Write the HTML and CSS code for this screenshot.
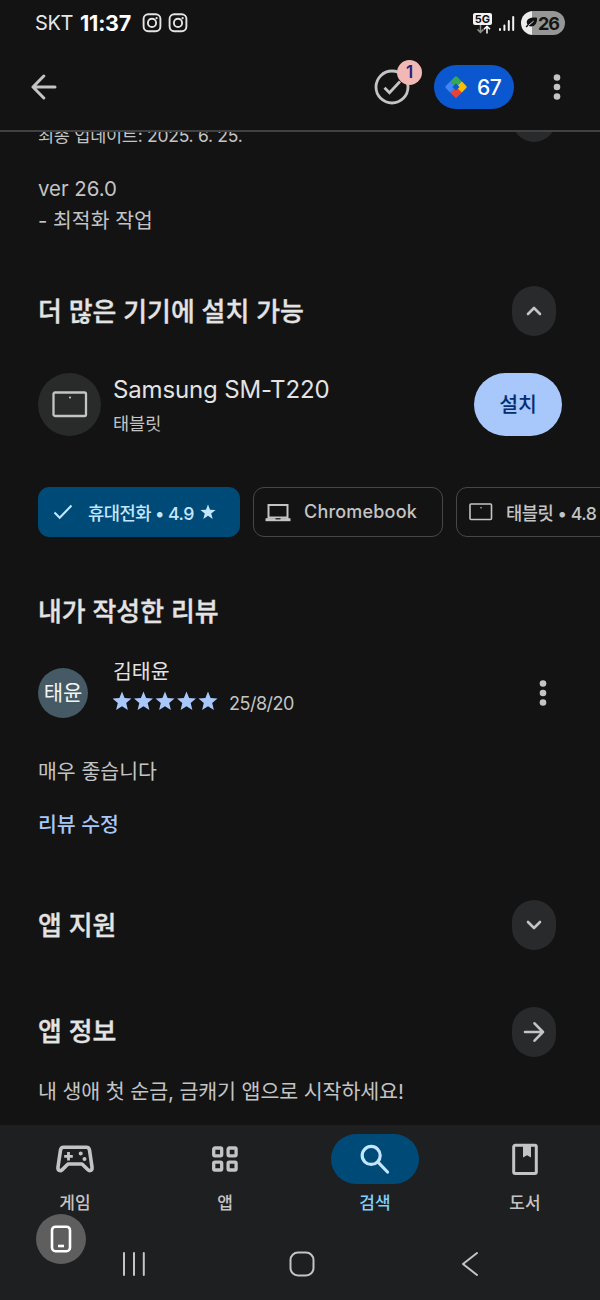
FILE: index.html
```html
<!DOCTYPE html>
<html lang="ko">
<head>
<meta charset="utf-8">
<title>앱 상세정보</title>
<link rel="stylesheet" href="styles.css">
</head>
<body>
<div class="screen">
  <header class="status">
    <span class="carrier">SKT</span>
    <span class="clock">11:37</span>
    <svg class="insta" width="20" height="20" viewBox="0 0 20 20"><rect x="1.6" y="1.2" width="16.8" height="17" rx="4.6"/><circle cx="10" cy="9.9" r="4.1"/><circle class="lens" cx="14.6" cy="5.2" r="1.1"/></svg>
    <svg class="insta second" width="20" height="20" viewBox="0 0 20 20"><rect x="1.6" y="1.2" width="16.8" height="17" rx="4.6"/><circle cx="10" cy="9.9" r="4.1"/><circle class="lens" cx="14.6" cy="5.2" r="1.1"/></svg>
    <div class="network">
      <span class="net-label">5G</span>
      <svg width="16" height="9" viewBox="0 0 16 9" fill="none" stroke-width="1.5"><path stroke="#8b8b8b" d="M5.5 0v7M2.5 4.4l3 3 3-3"/><path stroke="#fff" d="M12 8.5V1M9 4.2l3-3 3 3"/></svg>
    </div>
    <svg class="signal" width="17" height="17" viewBox="0 0 17 17" fill="none" stroke="#f2f2f2" stroke-width="2" stroke-linecap="round"><path d="M2 14v1M6.4 10.5V15M10.8 6v9"/><path d="M15.2 2v13"/></svg>
    <div class="battery">
      <svg width="13" height="12" viewBox="0 0 13 12"><path fill="#111" d="M12 .7C7 .2 2.5 1 1.8 4.6c-.2 1.2.1 2.2.7 3L.6 9.5l1 .9 1.8-1.6C8 11 12.500 7.500 12 .7z"/><path d="M3.300 8.600 8.600 4.200" stroke="#ddd" stroke-width="1"/></svg>
      <span>26</span>
    </div>
  </header>

  <div class="appbar">
    <svg class="back" width="26" height="26" viewBox="0 0 26 26"><path d="M24 13H2M12.800 2 2 13l10.800 11"/></svg>
    <div class="task">
      <svg width="36" height="36" viewBox="0 0 36 36"><circle cx="18" cy="18" r="16"/><path d="m10.500 18.700 5 5L26 12.500"/></svg>
      <span class="badge">1</span>
    </div>
    <div class="points">
      <svg width="24" height="24" viewBox="0 0 24 24"><g transform="rotate(45 12 12)"><path fill="#fbbc04" d="M12 4h6.500Q20 4 20 5.500V12h-8z"/><path fill="#ea4335" d="M12 12h8v6.500q0 1.500-1.500 1.500H12z"/><path fill="#4285f4" d="M4 12h8v8H5.500Q4 20 4 18.500z"/><path fill="#34a853" d="M4 12V5.500Q4 4 5.500 4H12v8z"/><rect x="9.500" y="9.500" width="5" height="5" fill="#0b57d0"/></g></svg>
      <span>67</span>
    </div>
    <svg class="dots" width="8" height="28" viewBox="0 0 8 28"><circle cx="4" cy="4.500" r="3.300"/><circle cx="4" cy="14" r="3.300"/><circle cx="4" cy="23.500" r="3.300"/></svg>
  </div>

  <main class="content">
    <div class="row updated">
      <p>최종 업데이트: 2025. 6. 25.</p>
      <span class="round"></span>
    </div>
    <div class="notes">
      <p class="ver">ver 26.0</p>
      <p>- 최적화 작업</p>
    </div>
    <div class="row devices-head">
      <h2>더 많은 기기에 설치 가능</h2>
      <span class="round"><svg width="16" height="10" viewBox="0 0 16 10"><path d="m2 8 6-6 6 6"/></svg></span>
    </div>
    <div class="device">
      <span class="device-icon"><svg width="36" height="27" viewBox="0 0 36 27"><rect x="1.500" y="1.500" width="32.500" height="23.500" rx="1.500"/><circle cx="18" cy="6.500" r="1.100"/></svg></span>
      <div class="device-text">
        <p class="model">Samsung SM-T220</p>
        <p class="kind">태블릿</p>
      </div>
      <span class="install">설치</span>
    </div>
    <div class="chips">
      <div class="chip selected">
        <svg width="20" height="16" viewBox="0 0 20 16"><path d="m1.500 8.500 5.200 5.300L18.500 1.500"/></svg>
        <span class="phone">휴대전화 • <b>4.9</b></span>
        <svg class="chip-star" width="16" height="16" viewBox="0 0 20 20"><path d="m10 .5 2.500 6.700 7 .3-5.500 4.400 1.900 6.900-5.900-4-5.900 4L6 11.900.500 7.500l7-.3z"/></svg>
      </div>
      <div class="chip chromebook">
        <svg width="26" height="19" viewBox="0 0 26 19"><path fill="none" stroke="#c4c4c4" stroke-width="2" d="M3.500 16V2h19v14"/><path fill="#c4c4c4" d="M.5 15.200h25v3H.5z"/><path fill="#c4c4c4" d="M3 13.500h20v2H3z"/><path fill="#131313" d="M10.500 15.200h5v1.200h-5z"/></svg>
        <span>Chromebook</span>
      </div>
      <div class="chip tablet">
        <svg width="24" height="18" viewBox="0 0 24 18"><rect x="1" y="1" width="21.500" height="15.500" rx="1" fill="none" stroke="#c4c4c4" stroke-width="1.600"/><circle cx="12" cy="4.700" r=".8" fill="#c4c4c4"/></svg>
        <span>태블릿 • <b>4.8</b></span>
      </div>
    </div>
    <h2 class="review-head">내가 작성한 리뷰</h2>
    <div class="reviewer">
      <span class="avatar">태윤</span>
      <div class="reviewer-text">
        <p class="name">김태윤</p>
        <div class="rating">
          <svg width="105" height="20" viewBox="0 0 105 20"><defs><path id="star" d="m10 .5 2.600 6.500 6.900.5-5.300 4.500 1.700 6.900-5.900-3.700-5.900 3.700L5.800 12 .500 7.500l6.900-.5z"/></defs><use href="#star" x="-1"/><use href="#star" x="20.500"/><use href="#star" x="42"/><use href="#star" x="63.500"/><use href="#star" x="85"/></svg>
          <span>25/8/20</span>
        </div>
      </div>
      <svg class="dots" width="8" height="28" viewBox="0 0 8 28"><circle cx="4" cy="4.500" r="3.300"/><circle cx="4" cy="14" r="3.300"/><circle cx="4" cy="23.500" r="3.300"/></svg>
    </div>
    <p class="review">매우 좋습니다</p>
    <p class="edit">리뷰 수정</p>
    <div class="row support">
      <h2>앱 지원</h2>
      <span class="round"><svg width="16" height="10" viewBox="0 0 16 10"><path d="m2 2 6 6 6-6"/></svg></span>
    </div>
    <div class="row about">
      <h2>앱 정보</h2>
      <span class="round"><svg width="22" height="22" viewBox="0 0 22 22"><path d="M2 11h18M11.500 2.300 20 11l-8.500 8.700"/></svg></span>
    </div>
    <p class="summary">내 생애 첫 순금, 금캐기 앱으로 시작하세요!</p>
  </main>

  <footer class="bottom">
    <nav class="tabs">
      <div class="tab">
        <span class="tab-icon"><svg width="40" height="30" viewBox="0 0 40 30" fill="none" stroke="#c4c4c4" stroke-width="3.600" stroke-linejoin="round"><path d="M8.700 3.300h22.600q2.700 0 3.200 2.800l2.500 17c.4 3.500-2.300 4.500-4.300 2.500L27 20H13l-5.700 5.600c-2 2-4.700 1-4.300-2.500L5.500 6.100q.5-2.800 3.200-2.800z"/><path stroke-width="2.800" d="M13.500 8v8.600M9.200 12.300h8.600"/><g fill="#c4c4c4" stroke="none"><circle cx="25.700" cy="9.500" r="2"/><circle cx="29.500" cy="15" r="2"/></g></svg></span>
        <span class="tab-label">게임</span>
      </div>
      <div class="tab">
        <span class="tab-icon"><svg width="28" height="28" viewBox="0 0 28 28" fill="none" stroke="#c4c4c4" stroke-width="3.300"><rect x="2.700" y="3" width="8" height="7.800" rx="1.200"/><rect x="17.100" y="3" width="8" height="7.800" rx="1.200"/><rect x="2.700" y="17.200" width="8" height="7.800" rx="1.200"/><rect x="17.100" y="17.200" width="8" height="7.800" rx="1.200"/></svg></span>
        <span class="tab-label">앱</span>
      </div>
      <div class="tab active">
        <span class="tab-icon"><svg width="32" height="32" viewBox="0 0 32 32" fill="none" stroke="#c2e7ff" stroke-width="3.200" stroke-linecap="round"><circle cx="12.200" cy="12.400" r="9"/><path d="m19 19.200 9.500 9.800"/></svg></span>
        <span class="tab-label">검색</span>
      </div>
      <div class="tab">
        <span class="tab-icon"><svg width="28" height="34" viewBox="0 0 28 34"><rect x="2.700" y="3.300" width="22.600" height="28.200" rx="1.500" fill="none" stroke="#c4c4c4" stroke-width="3"/><path fill="#c4c4c4" d="M12 3h8v12.500l-4-2.300-4 2.300z"/></svg></span>
        <span class="tab-label">도서</span>
      </div>
    </nav>
    <div class="sysnav">
      <svg width="26" height="26" viewBox="0 0 26 26"><path d="M3 2v22M13 2v22M22.800 2v22"/></svg>
      <svg width="26" height="26" viewBox="0 0 26 26"><rect x="1.500" y="1.500" width="23" height="23" rx="7.500"/></svg>
      <svg width="26" height="26" viewBox="0 0 26 26"><path d="M20 2 6 13l14 11"/></svg>
    </div>
    <span class="rotate"><svg width="22" height="28" viewBox="0 0 22 28"><rect x="2" y="1.700" width="18" height="24.500" rx="3.500"/><path d="M8 21h6"/></svg></span>
  </footer>
</div>
</body>
</html>
```
FILE: styles.css
```css
* { box-sizing: border-box; margin: 0; padding: 0; }
body { background: #131313; color: #c4c4c4; font-family: Inter, "Noto Sans CJK KR", sans-serif; }
p, h2, span { white-space: nowrap; }
svg { display: block; flex: none; }
.screen { width: 600px; height: 1300px; overflow: hidden; display: flex; flex-direction: column; }

.status { height: 46px; flex: none; display: flex; align-items: center; padding-left: 35px; color: #fff; }
.carrier { width: 45px; font-size: 20px; letter-spacing: -.4px; color: #e6e6e6; }
.clock { width: 62px; font-size: 21.500px; font-weight: 700; letter-spacing: -.2px; }
.insta { fill: none; stroke: #e4e4e4; stroke-width: 1.9; }
.insta.second { margin-left: 6px; }
.insta .lens { fill: #e4e4e4; stroke: none; }
.network { margin-left: 285px; width: 19px; display: flex; flex-direction: column; align-items: center; }
.net-label { width: 19px; height: 12px; border-radius: 2px; background: #f4f4f4; color: #111; font-size: 11px; line-height: 12px; font-weight: 700; text-align: center; }
.signal { margin-left: 6px; }
.battery { margin-left: 6px; width: 44px; height: 24px; border-radius: 12px; background: linear-gradient(90deg, #ececec 11px, #969696 11px); display: flex; align-items: center; padding-left: 4px; color: #151515; font-size: 18px; font-weight: 700; letter-spacing: -1px; }

.appbar { height: 86px; flex: none; display: flex; align-items: center; padding: 1px 39px 3px 31px; border-bottom: 2px solid #414141; }
.back { fill: none; stroke: #c4c4c4; stroke-width: 3; stroke-linecap: round; stroke-linejoin: round; }
.task { position: relative; margin-left: 317px; fill: none; stroke: #c4c4c4; stroke-width: 2.800; }
.badge { position: absolute; left: 23px; top: -9px; width: 25px; height: 25px; border-radius: 50%; background: #f2b8b5; color: #1f1f7a; font-size: 17px; line-height: 25px; font-weight: 600; text-align: center; }
.points { margin-left: 24px; width: 80px; height: 44px; border-radius: 22px; background: #0b57d0; color: #fff; display: flex; align-items: center; padding-left: 10px; gap: 9px; font-size: 21px; font-weight: 500; letter-spacing: -.6px; }
.dots { margin-left: auto; fill: #c4c4c4; }

.content { height: 993px; flex: none; overflow: hidden; padding: 0 44px 0 38px; }
.row { display: flex; justify-content: space-between; height: 50px; align-items: center; }
.round { width: 44px; height: 50px; border-radius: 22px; background: #292a2c; display: flex; align-items: center; justify-content: center; fill: none; stroke: #c4c4c4; stroke-width: 2.6; stroke-linecap: round; stroke-linejoin: round; }
.updated { margin-top: -40px; font-size: 17.500px; letter-spacing: -.27px; }
.updated p { padding-top: 35px; }
.notes { margin-top: 31px; font-size: 20.400px; line-height: 32px; height: 64px; }
h2 { font-size: 25.900px; line-height: 36px; font-weight: 500; color: #e3e3e3; -webkit-text-stroke: .35px #e3e3e3; }
.devices-head { margin-top: 49px; }
.device { margin-top: 37px; height: 63px; margin-right: -6px; display: flex; align-items: center; }
.device-icon { width: 63px; height: 63px; border-radius: 50%; background: #292a2a; display: flex; align-items: center; justify-content: center; fill: none; stroke: #c4c4c4; stroke-width: 2.300; }
.device-icon circle { fill: #c4c4c4; stroke: none; }
.device-text { margin-left: 12px; padding-top: 5px; }
.model { font-size: 24px; line-height: 34px; letter-spacing: -.15px; color: #e3e3e3; }
.kind { font-size: 17.500px; line-height: 34px; }
.install { margin-left: auto; width: 88px; height: 63px; border-radius: 31.500px; background: #a8c7fa; color: #062e6f; font-size: 20.500px; font-weight: 500; line-height: 63px; text-align: center; }
.chips { margin-top: 51px; width: 640px; height: 50px; display: flex; gap: 13px; }
.chip { height: 50px; border-radius: 11px; border: 1.500px solid #474747; display: flex; align-items: center; font-size: 18px; font-weight: 500; }
.chip b { font-weight: 500; }
.chip span { padding-bottom: 1px; }
.selected { width: 202px; background: #004a77; border-color: #004a77; color: #c2e7ff; padding-left: 14px; }
.selected path { fill: none; stroke: #c2e7ff; stroke-width: 2.100; }
.phone { margin-left: 15px; font-size: 17.700px; letter-spacing: -.55px; }
.chip-star { margin-left: 6px; }
.selected .chip-star path { fill: #c2e7ff; stroke: none; }
.chromebook { width: 190px; padding-left: 11px; gap: 13px; letter-spacing: .2px; }
.tablet { width: 205px; padding-left: 12px; gap: 13px; font-size: 17.700px; letter-spacing: -.5px; }
.review-head { margin-top: 57px; }
.reviewer { margin-top: 26px; height: 74px; display: flex; align-items: center; padding-right: 9px; }
.avatar { width: 50px; height: 50px; border-radius: 50%; background: #455a64; color: #f4f4f4; font-size: 21px; line-height: 50px; text-align: center; }
.reviewer-text { margin-left: 25px; margin-top: -15px; }
.name { font-size: 20.500px; line-height: 30px; color: #e3e3e3; }
.rating { display: flex; height: 28px; align-items: center; fill: #a8c7fa; font-size: 18px; }
.rating span { margin-left: 11px; padding-top: 5px; letter-spacing: -.5px; }
.review { margin-top: 26px; font-size: 20.500px; line-height: 32px; }
.edit { margin-top: 21px; font-size: 20.500px; line-height: 32px; font-weight: 500; color: #a8c7fa; }
.support { margin-top: 59px; }
.support h2, .devices-head h2 { padding-top: 1px; }
.about { margin-top: 57px; }
.summary { margin-top: 19px; font-size: 20.600px; line-height: 32px; letter-spacing: -.12px; }

.bottom { position: relative; height: 175px; flex: none; background: #1e1f20; }
.tabs { display: grid; grid-template-columns: repeat(4, 150px); height: 102px; padding-top: 9px; }
.tab { display: flex; flex-direction: column; align-items: center; }
.tab-icon { width: 88px; height: 50px; border-radius: 25px; display: flex; align-items: center; justify-content: center; }
.tab-label { margin-top: 6px; font-size: 17px; line-height: 26px; font-weight: 500; }
.active .tab-icon { background: #004a77; }
.active .tab-label { color: #7fcfff; }
.sysnav { display: flex; justify-content: space-between; padding: 24px 117px 0 121px; fill: none; stroke: #c4c4c4; stroke-width: 2; stroke-linecap: round; stroke-linejoin: round; }
.rotate { position: absolute; left: 36px; top: 89px; width: 50px; height: 50px; border-radius: 50%; background: #5e5e5e; display: flex; align-items: center; justify-content: center; fill: none; stroke: #fff; stroke-width: 2.600; }
```
